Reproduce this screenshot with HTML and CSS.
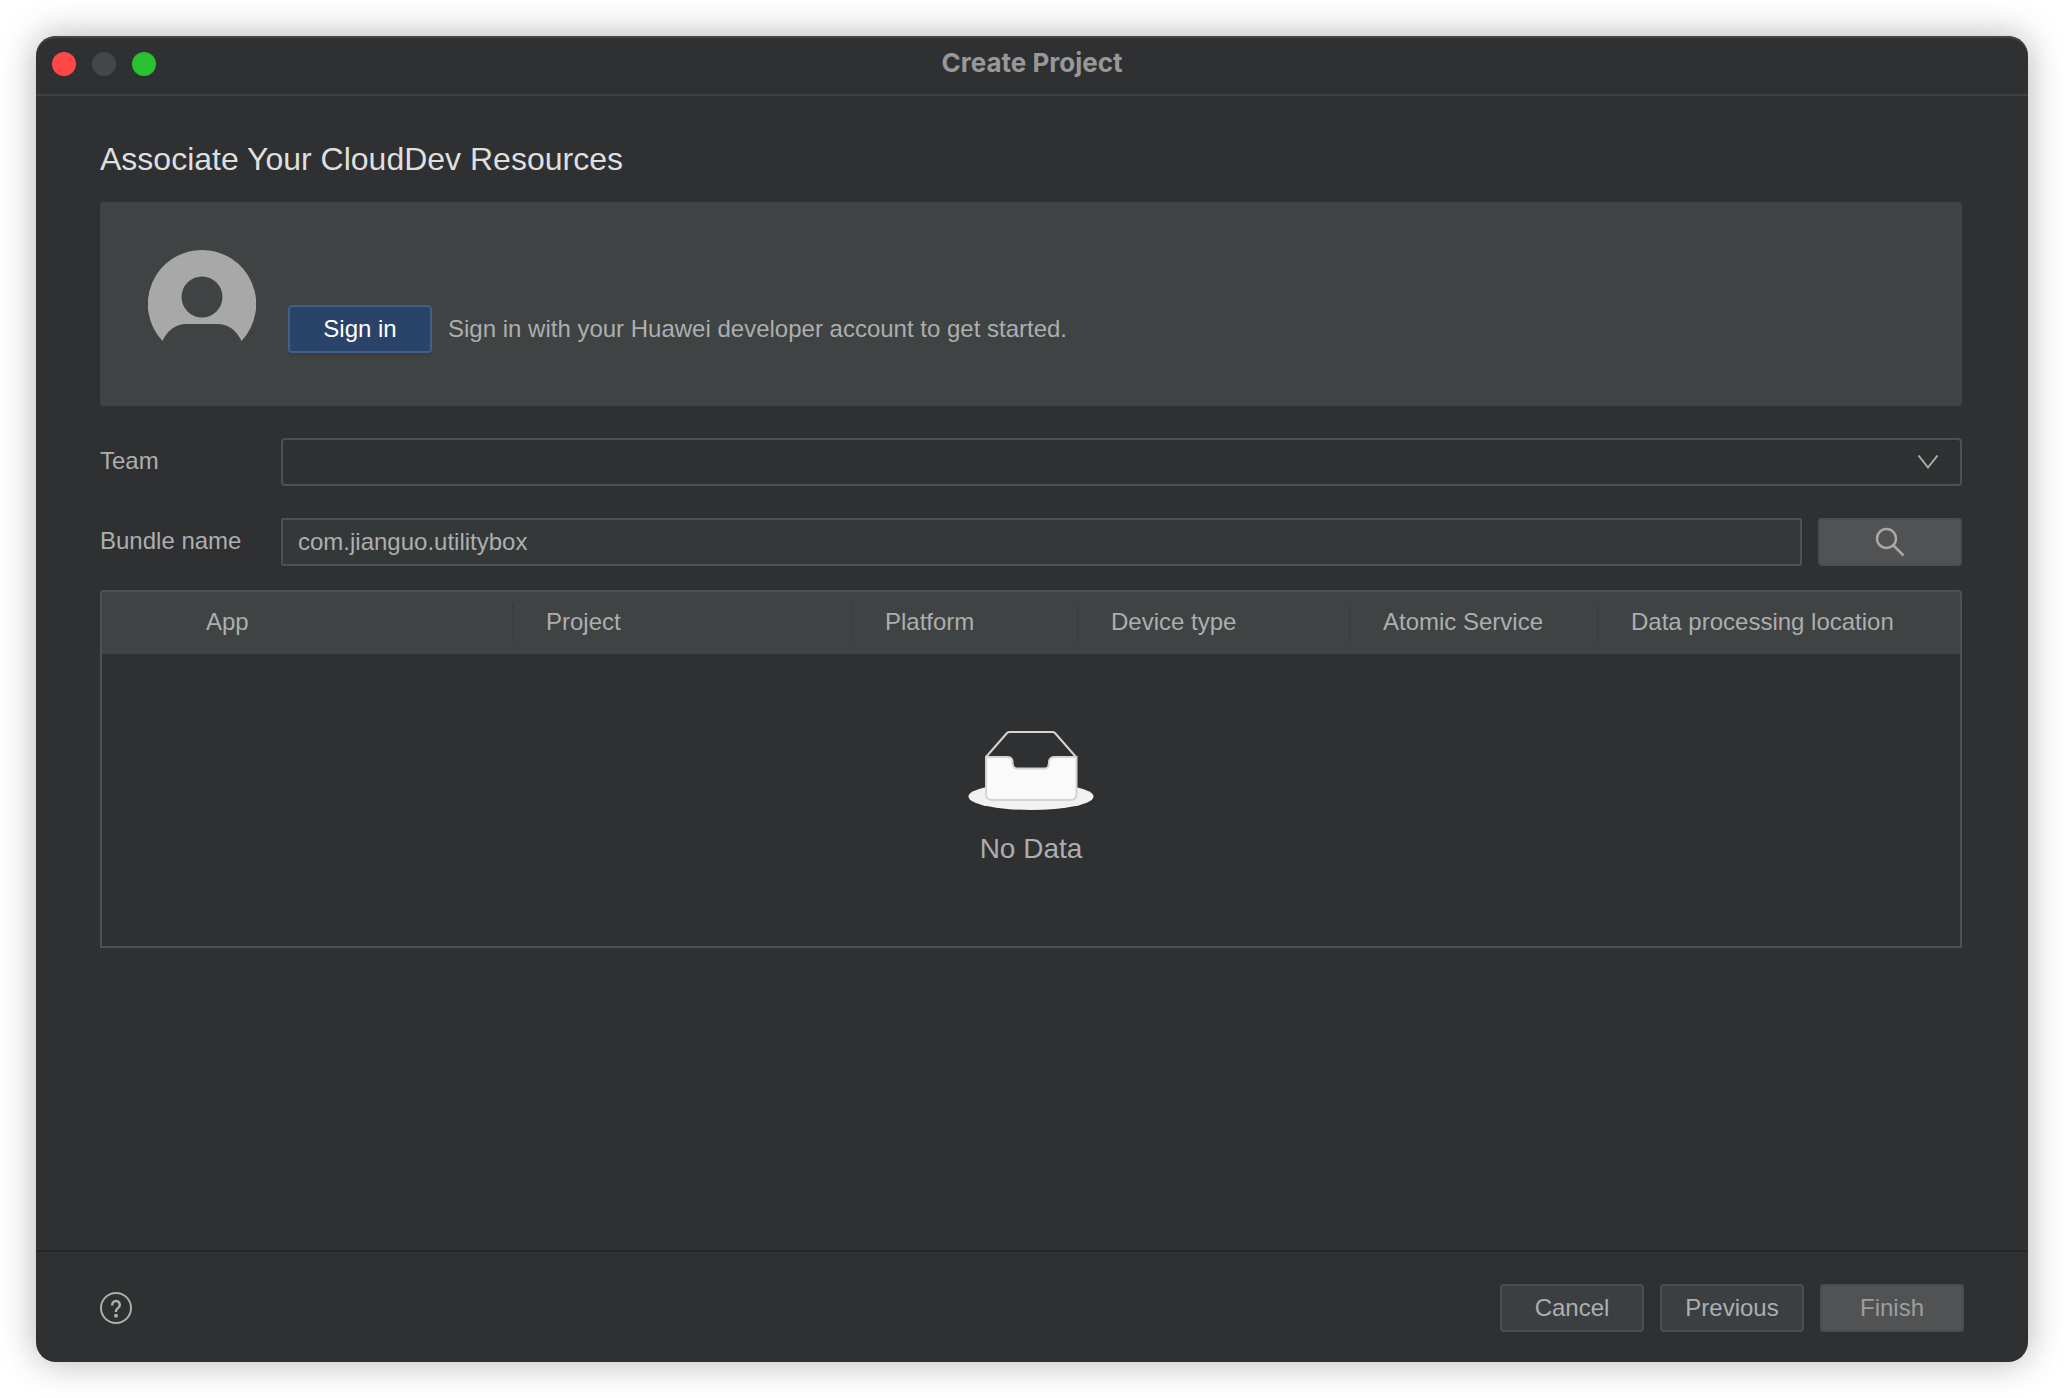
FILE: index.html
```html
<!DOCTYPE html>
<html lang="en">
<head>
  <meta charset="utf-8">
  <meta name="viewport" content="width=device-width, initial-scale=1">
  <title>Create Project</title>
  <link rel="stylesheet" href="styles.css">
</head>
<body>
  <div class="window">
    <header class="titlebar">
      <div class="lights">
        <button class="light light-close" type="button" aria-label="Close"></button>
        <button class="light light-minimize" type="button" aria-label="Minimize" disabled></button>
        <button class="light light-zoom" type="button" aria-label="Zoom"></button>
      </div>
      <div class="window-title">Create Project</div>
    </header>

    <main class="content">
      <h1 class="heading">Associate Your CloudDev Resources</h1>

      <section class="account">
        <svg class="avatar" viewBox="0 0 108 92" aria-hidden="true">
          <path fill-rule="evenodd" d="M54 0a54 54 0 0 1 39.500 91C89 81 81 74 69 74H39C27 74 19 81 14.500 91A54 54 0 0 1 54 0ZM54 26.500a20.500 20.500 0 1 0 0 41a20.500 20.500 0 1 0 0-41Z"/>
        </svg>
        <button class="btn btn-primary" type="button">Sign in</button>
        <p class="account-text">Sign in with your Huawei developer account to get started.</p>
      </section>

      <form class="form">
        <label class="label" for="team">Team</label>
        <div class="select-wrap">
          <select class="field select" id="team"><option></option></select>
          <svg class="chevron" viewBox="0 0 22 16" aria-hidden="true"><path d="M1.500 1.500 11 13.500 20.500 1.500"/></svg>
        </div>
        <label class="label" for="bundle">Bundle name</label>
        <div class="bundle">
          <input class="field input" id="bundle" type="text" value="com.jianguo.utilitybox">
          <button class="btn btn-disabled" type="button" aria-label="Search">
            <svg class="search" viewBox="0 0 30 30" aria-hidden="true"><circle cx="11.500" cy="11.500" r="9.500"/><path d="M18.500 18.500 28.500 28.500"/></svg>
          </button>
        </div>
      </form>

      <div class="table-frame">
        <table class="table">
          <colgroup>
            <col class="col-app"><col class="col-project"><col class="col-platform">
            <col class="col-device"><col class="col-service"><col class="col-location">
          </colgroup>
          <thead>
            <tr>
              <th scope="col">App</th>
              <th scope="col">Project</th>
              <th scope="col">Platform</th>
              <th scope="col">Device type</th>
              <th scope="col">Atomic Service</th>
              <th scope="col">Data processing location</th>
            </tr>
          </thead>
          <tbody>
            <tr>
              <td class="empty" colspan="6">
                <svg class="empty-icon" viewBox="0 0 126 80" aria-hidden="true">
                  <ellipse cx="63" cy="66.500" rx="62.500" ry="13.500" fill="#f1f1f1"/>
                  <path d="M18 27 39 3Q40 2 41.500 2H84.500Q86 2 87 3L108 27" fill="none" stroke="#d4d4d4" stroke-width="2"/>
                  <path d="M18 27H39Q44 27 44.500 31V33Q45 38.500 49 38.500H77Q80.500 38.500 81 33V31Q82 27 86.500 27H108.500V64Q108.500 70 102.500 70H24Q18 70 18 64Z" fill="#fafafa" stroke="#d4d4d4" stroke-width="2"/>
                </svg>
                <p class="empty-text">No Data</p>
              </td>
            </tr>
          </tbody>
        </table>
      </div>
    </main>

    <footer class="footer">
      <button class="help" type="button" aria-label="Help">
        <svg class="help-icon" viewBox="0 0 32 32" aria-hidden="true">
          <circle cx="16" cy="16" r="15"/>
          <path d="M12.200 13.500V12.800A3.800 3.800 0 1 1 18 16Q16 17.200 16 19.500V20"/>
          <circle class="help-dot" cx="16" cy="23.800" r="2"/>
        </svg>
      </button>
      <button class="btn" type="button">Cancel</button>
      <button class="btn" type="button">Previous</button>
      <button class="btn btn-disabled" type="button" disabled>Finish</button>
    </footer>
  </div>
</body>
</html>
```
FILE: styles.css
```css
* {
  box-sizing: border-box;
}

body {
  margin: 0;
  padding: 36px;
  min-height: 100vh;
  display: flex;
  background: #ffffff;
  color: #adaeae;
  font: 24px/28px "Liberation Sans", Arial, sans-serif;
}

h1,
p {
  margin: 0;
  font-weight: normal;
}

button,
input,
select {
  font: inherit;
  color: inherit;
  margin: 0;
}

.window {
  flex: 1;
  min-width: 0;
  display: flex;
  flex-direction: column;
  border-radius: 20px;
  background: #2f3032;
  box-shadow: 0 0 36px rgba(0, 0, 0, 0.3), inset 0 2px 0 #444546;
}

/* Title bar */
.titlebar {
  display: grid;
  grid-template-columns: 1fr auto 1fr;
  align-items: center;
  height: 60px;
  padding: 0 16px 2px;
  border-bottom: 2px solid #3e3f40;
}

.lights {
  display: flex;
  gap: 16px;
}

.light {
  width: 24px;
  height: 24px;
  padding: 0;
  border: 0;
  border-radius: 50%;
}

.light-close {
  background: #ff4845;
}

.light-minimize {
  background: #464749;
}

.light-zoom {
  background: #29c132;
}

.window-title {
  padding-bottom: 2px;
  color: #989898;
  font-family: Inter, sans-serif;
  font-size: 26px;
  font-weight: 700;
}

/* Main content */
.content {
  flex: 1;
  padding: 42px 66px 0 64px;
}

.heading {
  margin-bottom: 22px;
  color: #dfdfdf;
  font-size: 32px;
  line-height: 42px;
}

.account {
  display: flex;
  align-items: flex-start;
  height: 204px;
  padding: 48px;
  border-radius: 4px;
  background: #3f4343;
}

.avatar {
  width: 108px;
  height: 92px;
  margin-right: 32px;
  fill: #a8a8a8;
}

.account-text {
  margin: 65px 0 0 16px;
}

.btn {
  display: flex;
  align-items: center;
  justify-content: center;
  width: 144px;
  height: 48px;
  flex: none;
  padding: 0;
  border: 2px solid #4c4e4e;
  border-radius: 4px;
  background: #3c3f41;
}

.btn-primary {
  margin-top: 55px;
  border-color: #40608c;
  background: #2a4369;
  color: #ffffff;
  box-shadow: 0 3px 0 #3b3d3e;
}

.btn-disabled {
  border-color: #4c4d4f;
  background: #515254;
  color: #9d9d9d;
}

.form {
  display: grid;
  grid-template-columns: 181px 1fr;
  row-gap: 32px;
  padding: 32px 0 24px;
}

.label {
  padding-top: 9px;
}

.field {
  display: block;
  width: 100%;
  height: 48px;
  padding: 0 15px;
  border: 2px solid #4e5051;
  outline: 0;
}

.select-wrap {
  position: relative;
}

.select {
  appearance: none;
  border-radius: 4px;
  background: #2f3032;
}

.chevron {
  position: absolute;
  top: 16px;
  right: 23px;
  width: 22px;
  height: 16px;
  fill: none;
  stroke: #adaeae;
  stroke-width: 2;
  pointer-events: none;
}

.bundle {
  display: flex;
  gap: 16px;
}

.input {
  border-radius: 2px;
  background: #353839;
}

.search {
  width: 30px;
  height: 30px;
  fill: none;
  stroke: #a8a8a8;
  stroke-width: 2.5;
}

/* Resource table */
.table-frame {
  border: 2px solid #4e5051;
  border-radius: 4px 4px 0 0;
}

.table {
  width: 100%;
  table-layout: fixed;
  border-collapse: collapse;
}

.col-app {
  width: 412px;
}

.col-project {
  width: 339px;
}

.col-platform {
  width: 226px;
}

.col-device {
  width: 272px;
}

.col-service {
  width: 248px;
}

.table th {
  height: 62px;
  padding: 0 0 2px 32px;
  text-align: left;
  font-weight: normal;
  white-space: nowrap;
  background: linear-gradient(#3b3e3f, #3b3e3f) right center / 2px 38px no-repeat #3f4343;
}

.table th:first-child {
  padding-left: 104px;
}

.table th:last-child {
  background: #3f4343;
}

.empty {
  height: 292px;
  padding: 76px 0 0;
  vertical-align: top;
  text-align: center;
}

.empty-icon {
  display: block;
  width: 126px;
  height: 80px;
  margin: 0 auto 23px;
}

.empty-text {
  font-size: 28px;
  line-height: 32px;
}

/* Footer */
.footer {
  display: flex;
  align-items: center;
  gap: 16px;
  height: 112px;
  padding: 2px 64px 0;
  border-top: 2px solid #252628;
}

.help {
  width: 32px;
  height: 32px;
  margin-right: auto;
  padding: 0;
  border: 0;
  background: none;
}

.help-icon {
  display: block;
  fill: none;
  stroke: #adaeae;
  stroke-width: 2;
}

.help-icon path {
  stroke-width: 2.5;
}

.help-icon .help-dot {
  fill: #adaeae;
  stroke: none;
}
```
